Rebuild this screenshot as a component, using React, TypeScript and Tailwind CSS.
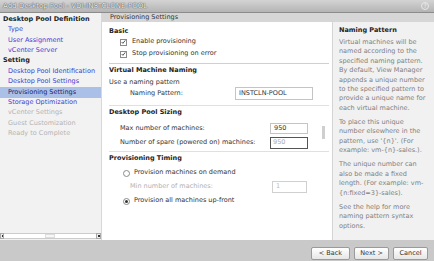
import React from 'react'

const navItems: { label: string; kind: 'head' | 'link' | 'active' | 'off' }[] = [
  { label: 'Desktop Pool Definition', kind: 'head' },
  { label: 'Type', kind: 'link' },
  { label: 'User Assignment', kind: 'link' },
  { label: 'vCenter Server', kind: 'link' },
  { label: 'Setting', kind: 'head' },
  { label: 'Desktop Pool Identification', kind: 'link' },
  { label: 'Desktop Pool Settings', kind: 'link' },
  { label: 'Provisioning Settings', kind: 'active' },
  { label: 'Storage Optimization', kind: 'link' },
  { label: 'vCenter Settings', kind: 'off' },
  { label: 'Guest Customization', kind: 'off' },
  { label: 'Ready to Complete', kind: 'off' },
]

const helpParas = [
  ['Virtual machines will be', 'named according to the', 'specified naming pattern.', 'By default, View Manager', 'appends a unique number', 'to the specified pattern to', 'provide a unique name for', 'each virtual machine.'],
  ['To place this unique', 'number elsewhere in the', "pattern, use '{n}'. (For", 'example: vm-{n}-sales.).'],
  ['The unique number can', 'also be made a fixed', 'length. (For example: vm-', '{n:fixed=3}-sales).'],
  ['See the help for more', 'naming pattern syntax', 'options.'],
]

function Check() {
  return (
    <span className="w-[7px] h-[7px] border border-[#8a8a8a] bg-white flex items-center justify-center">
      <svg width="6" height="6" viewBox="0 0 6 6">
        <path d="M0.8 3 L2.3 4.6 L5.2 1" fill="none" stroke="#333" strokeWidth="1" />
      </svg>
    </span>
  )
}

function Radio({ on }: { on?: boolean }) {
  return (
    <span className="w-[7px] h-[7px] rounded-full border border-[#8a8a8a] bg-white flex items-center justify-center">
      {on && <span className="w-[3px] h-[3px] rounded-full bg-[#333]" />}
    </span>
  )
}

function Button({ children, wide }: { children: React.ReactNode; wide?: boolean }) {
  return (
    <div
      className={
        'h-[13px] border border-[#9a9a9a] rounded-[2px] bg-gradient-to-b from-white to-[#e6e6e6] flex items-center justify-center text-[6.5px] text-[#333] ' +
        (wide ? 'w-[39px]' : 'w-[35px]')
      }
    >
      {children}
    </div>
  )
}

export default function App() {
  return (
    <div className="w-[434px] h-[261px] flex flex-col overflow-hidden bg-white text-[#333] font-['DejaVu_Sans',sans-serif] text-[6.5px]">
      {/* title bar */}
      <div className="h-[13px] shrink-0 flex items-center justify-between px-[3px] bg-gradient-to-b from-[#d4d4d4] to-[#b4b4b4] border-b border-[#8c8c8c]">
        <span className="text-[#f2f2f2] text-[7px] [text-shadow:0_0_1px_#444,0_0_1px_#444]">Add Desktop Pool - VDI-INSTCLONE-POOL</span>
        <span className="w-[8px] h-[8px] mr-[2px] rounded-full border border-[#e8e8e8] text-[6px] text-[#eee] flex items-center justify-center leading-none">?</span>
      </div>

      <div className="flex-1 flex min-h-0">
        {/* nav */}
        <div className="w-[102px] shrink-0 bg-[#f2f2f2] border-r border-[#d8d8d8] flex flex-col">
          <div className="flex-1 pt-[1.5px]">
            {navItems.map((n) => (
              <div
                key={n.label}
                className={
                  'h-[10.4px] flex items-center whitespace-nowrap ' +
                  (n.kind === 'head'
                    ? 'pl-[3px] font-bold text-[#222]'
                    : n.kind === 'active'
                    ? 'pl-[8px] bg-[#aac0e6] text-[#1a1a70]'
                    : n.kind === 'off'
                    ? 'pl-[8px] text-[#b4b4b4]'
                    : 'pl-[8px] text-[#4040d0]')
                }
              >
                {n.label}
              </div>
            ))}
          </div>
          <div className="h-[7px] mb-[1px] flex items-center">
            <span className="w-[4px] h-[6px] border border-[#aaa] bg-[#eee] flex items-center justify-center">
              <span className="w-[1px] h-[2px] bg-[#333]" />
            </span>
            <span className="flex-1 h-[6px] border-y border-[#ccc] bg-white flex items-center justify-center">
              <span className="w-[10px] h-[4px] border border-[#ddd] bg-[#f7f7f7]" />
            </span>
            <span className="w-[5px] h-[6px] border border-[#aaa] bg-[#eee] flex items-center justify-center">
              <span className="w-[2px] h-[2px] bg-[#333]" />
            </span>
          </div>
        </div>

        <div className="flex-1 flex flex-col min-w-0">
          <div className="h-[9px] shrink-0 bg-[#d6d6d6] flex items-center pl-[8px] text-[#333]">Provisioning Settings</div>
          <div className="flex-1 flex min-h-0">
            {/* content */}
            <div className="flex-1 relative pl-[7px] pr-[3px] flex flex-col">
              <div className="h-[9px] mt-[5px] flex items-center font-bold text-[#222]">Basic</div>
              <div className="h-[12px] flex items-center gap-[5px] pl-[11px]"><Check />Enable provisioning</div>
              <div className="h-[12px] flex items-center gap-[5px] pl-[11px]"><Check />Stop provisioning on error</div>
              <div className="h-[4px] border-b border-[#d0d0d0]" />
              <div className="h-[14px] flex items-center font-bold text-[#222]">Virtual Machine Naming</div>
              <div className="h-[9px] flex items-center">Use a naming pattern</div>
              <div className="h-[13px] flex items-center pl-[21px]">
                <span>Naming Pattern:</span>
                <span className="ml-auto mr-[16px] w-[78px] h-[13px] border border-[#c4c4c4] flex items-center pl-[3px] text-[#333]">INSTCLN-POOL</span>
              </div>
              <div className="h-[6px] border-b border-[#e0e0e0]" />
              <div className="h-[14px] flex items-center font-bold text-[#222]">Desktop Pool Sizing</div>
              <div className="h-[11px] mt-[3px] flex items-center pl-[11px]">
                <span>Max number of machines:</span>
                <span className="ml-auto mr-[21px] w-[38px] h-[11px] border border-[#c4c4c4] flex items-center pl-[3px]">950</span>
              </div>
              <div className="h-[12px] mt-[3px] flex items-center pl-[11px]">
                <span>Number of spare (powered on) machines:</span>
                <span className="ml-auto mr-[21px] w-[38px] h-[12px] border-[1.5px] border-[#555] flex items-center pl-[2px] text-[#aaa]">950</span>
              </div>
              <div className="h-[3px] border-b border-[#e0e0e0]" />
              <div className="h-[14px] flex items-center font-bold text-[#222]">Provisioning Timing</div>
              <div className="h-[14px] flex items-center gap-[4px] pl-[14px]"><Radio />Provision machines on demand</div>
              <div className="h-[12px] mt-[1px] flex items-center pl-[21px] text-[#b0b0b0]">
                <span>Min number of machines:</span>
                <span className="ml-auto mr-[22px] w-[35px] h-[12px] border border-[#d0d0d0] flex items-center pl-[3px] text-[#bbb]">1</span>
              </div>
              <div className="h-[16px] flex items-center gap-[4px] pl-[14px]"><Radio on />Provision all machines up-front</div>
              <div className="absolute right-[7px] top-[104px] w-[3px] h-[13px] bg-[#cfcfcf]" />
            </div>

            {/* help */}
            <div className="w-[102px] shrink-0 bg-[#f1f1f1] border-l border-[#d4d4d4] pl-[6px] pr-[2px]">
              <div className="h-[10px] mt-[4px] flex items-center font-bold text-[#222]">Naming Pattern</div>
              <div className="mt-[2px] text-[#808080] leading-[9.4px]">
                {helpParas.map((p, i) => (
                  <div key={i} className="mb-[4.8px] whitespace-nowrap">
                    {p.map((l) => (
                      <div key={l}>{l}</div>
                    ))}
                  </div>
                ))}
              </div>
            </div>
          </div>
        </div>
      </div>

      {/* footer */}
      <div className="h-[21px] shrink-0 bg-[#c9c9c9] flex items-start justify-end gap-[4px] pt-[7px] pr-[6px]">
        <Button wide>&lt; Back</Button>
        <Button>Next &gt;</Button>
        <Button>Cancel</Button>
      </div>
    </div>
  )
}
